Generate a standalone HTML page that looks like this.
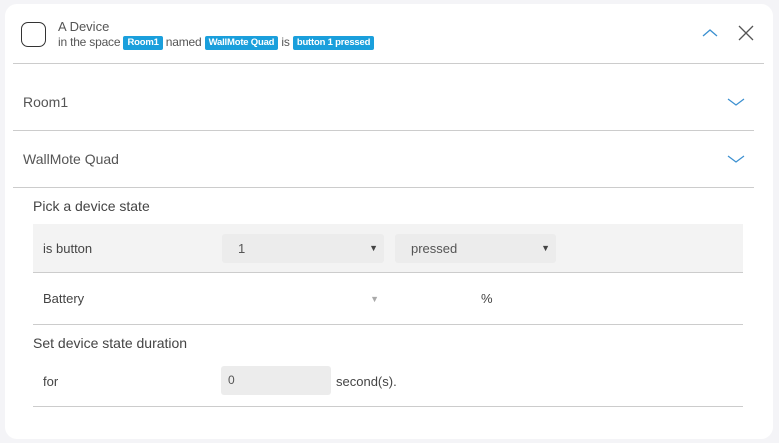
<!DOCTYPE html>
<html><head><style>
*{margin:0;padding:0;box-sizing:border-box}
body{width:779px;height:443px;background:#f4f4f7;font-family:"Liberation Sans",sans-serif;color:#444;position:relative;overflow:hidden}
.card{position:absolute;left:5px;top:4px;width:768px;height:435px;background:#fff;border-radius:12px}
.a{position:absolute}
.hl{position:absolute;height:1px;background:#ccc}
.tag{display:inline-block;background:#1a9fdc;color:#fff;font-size:9.5px;font-weight:bold;padding:1px 4px;border-radius:2px;line-height:12px;vertical-align:1px}
.sel{position:absolute;background:#ececec;border-radius:3px;font-size:13px;color:#555;padding:0 0 0 16px;line-height:29px}
.arr{position:absolute;right:6px;top:0;font-size:9px;color:#444}
</style></head><body>
<div class="card"></div>
<div class="a" style="left:21px;top:22px;width:25px;height:25px;border:1.5px solid #333;border-radius:7px"></div>
<div class="a" style="left:58px;top:19px;font-size:13px;color:#555">A Device</div>
<div class="a" style="left:58px;top:35px;font-size:12px;color:#555;white-space:nowrap;letter-spacing:-0.2px">in the space <span class="tag">Room1</span> named <span class="tag">WallMote Quad</span> is <span class="tag">button 1 pressed</span></div>
<svg class="a" style="left:702px;top:28px" width="16" height="10"><path d="M1 8 L8 2 L15 8" stroke="#3a8fd0" stroke-width="1.3" fill="none"/></svg>
<svg class="a" style="left:738px;top:25px" width="16" height="16"><path d="M1 1L15 15M15 1L1 15" stroke="#555" stroke-width="1.3" fill="none"/></svg>
<div class="hl" style="left:13px;top:63px;width:751px"></div>
<div class="a" style="left:23px;top:94px;font-size:14px;color:#555">Room1</div>
<svg class="a" style="left:727px;top:97px" width="18" height="10"><path d="M1 2 L9 8 L17 2" stroke="#3a8fd0" stroke-width="1.2" fill="none"/></svg>
<div class="hl" style="left:13px;top:130px;width:741px"></div>
<div class="a" style="left:23px;top:151px;font-size:14px;color:#555">WallMote Quad</div>
<svg class="a" style="left:727px;top:154px" width="18" height="10"><path d="M1 2 L9 8 L17 2" stroke="#3a8fd0" stroke-width="1.2" fill="none"/></svg>
<div class="hl" style="left:13px;top:187px;width:741px"></div>
<div class="a" style="left:33px;top:198px;font-size:14px;color:#444">Pick a device state</div>
<div class="a" style="left:33px;top:224px;width:710px;height:49px;background:#f3f3f3;border-bottom:1px solid #ccc"></div>
<div class="a" style="left:43px;top:241px;font-size:13px;color:#444">is button</div>
<div class="sel" style="left:222px;top:234px;width:162px">1<span class="arr">▼</span></div>
<div class="sel" style="left:395px;top:234px;width:161px">pressed<span class="arr">▼</span></div>
<div class="a" style="left:43px;top:291px;font-size:13px;color:#444">Battery</div>
<div class="sel" style="left:222px;top:285px;width:163px;background:#f5f5f5"><span class="arr" style="color:#aaa">▼</span></div>
<div class="sel" style="left:395px;top:285px;width:82px;background:#f5f5f5"></div>
<div class="a" style="left:481px;top:291px;font-size:13px;color:#444">%</div>
<div class="hl" style="left:33px;top:324px;width:710px"></div>
<div class="a" style="left:33px;top:335px;font-size:14px;color:#444">Set device state duration</div>
<div class="a" style="left:43px;top:374px;font-size:13px;color:#444">for</div>
<div class="sel" style="left:221px;top:366px;width:110px;padding-left:7px;font-size:12px">0</div>
<div class="a" style="left:336px;top:374px;font-size:13px;color:#444">second(s).</div>
<div class="hl" style="left:33px;top:406px;width:710px"></div>
</body></html>
